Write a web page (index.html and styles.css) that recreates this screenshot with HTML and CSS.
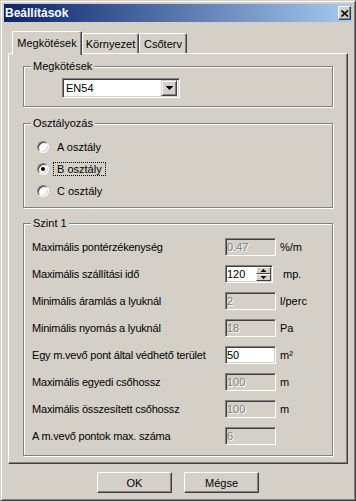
FILE: index.html
```html
<!DOCTYPE html>
<html lang="hu">
<head>
    <meta charset="UTF-8">
    <title>Beállítások</title>
    <link rel="stylesheet" href="styles.css">
</head>
<body>
    <div class="window">
        <div class="titlebar">
            <span class="title">Beállítások</span>
            <span class="close-btn">
                <svg width="8" height="7" viewBox="0 0 8 7"><path d="M0.5 0.5L7 6.5M7 0.5L0.5 6.5" stroke="#000" stroke-width="1.6"/></svg>
            </span>
        </div>

        <div class="tabs">
            <div class="tab tab-active" style="width:70px">Megkötések</div>
            <div class="tab" style="width:57px">Környezet</div>
            <div class="tab" style="width:48px">Csőterv</div>
        </div>

        <div class="panel">
            <fieldset class="group group-binding">
                <legend>Megkötések</legend>
                <div class="group-body">
                    <div class="combo">
                        <span class="combo-value">EN54</span>
                        <span class="combo-btn">
                            <svg width="7" height="4" viewBox="0 0 7 4"><path d="M0 0h7v1h-1v1h-1v1h-1v1h-1v-1h-1v-1h-1v-1h-1z" fill="#000"/></svg>
                        </span>
                    </div>
                </div>
            </fieldset>

            <fieldset class="group group-class">
                <legend>Osztályozás</legend>
                <div class="group-body">
                    <div class="radio"><span class="radio-box"></span><span class="radio-text">A osztály</span></div>
                    <div class="radio"><span class="radio-box radio-checked"></span><span class="radio-text radio-focus">B osztály</span></div>
                    <div class="radio"><span class="radio-box"></span><span class="radio-text">C osztály</span></div>
                </div>
            </fieldset>

            <fieldset class="group group-level">
                <legend>Szint 1</legend>
                <div class="group-body">
                    <div class="fields">
                        <div class="field-label">Maximális pontérzékenység</div>
                        <div class="input input-disabled">0.47</div>
                        <div class="unit">%/m</div>

                        <div class="field-label">Maximális szállítási idő</div>
                        <div class="spin">
                            <span class="spin-value">120</span>
                            <span class="spin-buttons">
                                <span class="spin-btn"><svg width="5" height="3" viewBox="0 0 5 3"><path d="M2 0h1v1h1v1h1v1h-5v-1h1v-1h1z" fill="#000"/></svg></span>
                                <span class="spin-btn"><svg width="5" height="3" viewBox="0 0 5 3"><path d="M0 0h5v1h-1v1h-1v1h-1v-1h-1v-1h-1z" fill="#000"/></svg></span>
                            </span>
                        </div>
                        <div class="unit unit-spin">mp.</div>

                        <div class="field-label">Minimális áramlás a lyuknál</div>
                        <div class="input input-disabled">2</div>
                        <div class="unit">l/perc</div>

                        <div class="field-label">Minimális nyomás a lyuknál</div>
                        <div class="input input-disabled">18</div>
                        <div class="unit">Pa</div>

                        <div class="field-label">Egy m.vevő pont által védhető terület</div>
                        <div class="input input-active">50</div>
                        <div class="unit">m²</div>

                        <div class="field-label">Maximális egyedi csőhossz</div>
                        <div class="input input-disabled">100</div>
                        <div class="unit">m</div>

                        <div class="field-label">Maximális összesített csőhossz</div>
                        <div class="input input-disabled">100</div>
                        <div class="unit">m</div>

                        <div class="field-label">A m.vevő pontok max. száma</div>
                        <div class="input input-disabled">6</div>
                        <div class="unit"></div>
                    </div>
                </div>
            </fieldset>
        </div>

        <div class="actions">
            <button class="btn" type="button">OK</button>
            <button class="btn" type="button">Mégse</button>
        </div>
    </div>
</body>
</html>
```

FILE: styles.css
```css
body {
    margin: 0;
    background-color: #d4d0c8;
    font-family: "Liberation Sans", Arial, sans-serif;
    font-size: 11px;
    color: #000;
}

.window {
    width: 356px;
    height: 501px;
    box-sizing: border-box;
    border: 1px solid;
    border-color: #d4d0c8 #404040 #404040 #d4d0c8;
    box-shadow: inset 1px 1px #fff, inset -1px -1px #808080;
    padding: 3px;
    background-color: #d4d0c8;
    display: flex;
    flex-direction: column;
}

/* title bar */
.titlebar {
    height: 18px;
    display: flex;
    align-items: center;
    justify-content: space-between;
    padding: 0 1px 0 1px;
    background: linear-gradient(to right, #0a246a, #a6caf0);
}

.title {
    color: #fff;
    font-weight: bold;
    font-size: 12px;
}

.close-btn {
    width: 13px;
    height: 14px;
    box-sizing: border-box;
    border: 1px solid;
    border-color: #fff #404040 #404040 #fff;
    box-shadow: inset -1px -1px #808080;
    background-color: #d4d0c8;
    display: flex;
    align-items: center;
    justify-content: center;
}

/* tabs */
.tabs {
    display: flex;
    align-items: flex-end;
    height: 24px;
    margin-top: 9px;
    margin-bottom: -2px;
    padding-left: 8px;
    position: relative;
    z-index: 1;
}

.tab {
    height: 20px;
    margin-bottom: 2px;
    box-sizing: border-box;
    border: 1px solid;
    border-color: #fff #404040 transparent #fff;
    border-bottom: none;
    border-radius: 2px 2px 0 0;
    box-shadow: inset -1px 0 #808080;
    display: flex;
    align-items: center;
    justify-content: center;
    background-color: #d4d0c8;
}

.tab-active {
    height: 24px;
    margin-bottom: 0;
    padding-bottom: 2px;
}

/* panel */
.panel {
    margin: 0 4px;
    border: 1px solid;
    border-color: #fff #404040 #404040 #fff;
    box-shadow: inset -1px -1px #808080;
    padding: 6px 14px 7px 14px;
}

.group {
    margin: 0;
    padding: 0;
    min-width: 0;
    border: 1px solid #808080;
    box-shadow: inset 1px 1px #fff, 1px 1px #fff;
}

.group legend {
    margin-left: 7px;
    padding: 0 2px;
    line-height: 13px;
    background-color: #d4d0c8;
}

.group-class {
    margin-top: 10px;
}

.group-level {
    margin-top: 9px;
}

.group-binding .group-body {
    padding: 5px 0 8px 38px;
}

.group-class .group-body {
    padding: 6px 0 5px 13px;
}

.group-level .group-body {
    padding: 3px 0 6px 8px;
}

/* combo */
.combo {
    width: 118px;
    height: 20px;
    box-sizing: border-box;
    border: 1px solid;
    border-color: #808080 #fff #fff #808080;
    box-shadow: inset 1px 1px #404040, inset -1px -1px #d4d0c8;
    background-color: #fff;
    display: flex;
    align-items: center;
    padding: 2px;
}

.combo-value {
    flex: 1;
    padding-left: 1px;
}

.combo-btn {
    width: 16px;
    height: 16px;
    box-sizing: border-box;
    border: 1px solid;
    border-color: #d4d0c8 #404040 #404040 #d4d0c8;
    box-shadow: inset 1px 1px #fff, inset -1px -1px #808080;
    background-color: #d4d0c8;
    display: flex;
    align-items: center;
    justify-content: center;
}

/* radios */
.radio {
    display: flex;
    align-items: center;
    height: 22px;
}

.radio-box {
    width: 12px;
    height: 12px;
    box-sizing: border-box;
    border-radius: 50%;
    border: 1px solid;
    border-color: #808080 #fff #fff #808080;
    box-shadow: inset 1px 1px #404040, inset -1px -1px #d4d0c8;
    background-color: #fff;
    display: flex;
    align-items: center;
    justify-content: center;
    margin-right: 4px;
}

.radio-checked::after {
    content: "";
    width: 4px;
    height: 4px;
    border-radius: 50%;
    background-color: #000;
}

.radio-text {
    border: 1px dotted transparent;
    padding: 0 3px;
    line-height: 12px;
}

.radio-focus {
    border-color: #000;
}

/* fields */
.fields {
    display: grid;
    grid-template-columns: 193px 51px auto;
    grid-auto-rows: 27px;
    align-items: center;
}

.field-label {
    letter-spacing: -0.2px;
}

.input {
    height: 18px;
    box-sizing: border-box;
    border: 1px solid;
    border-color: #808080 #fff #fff #808080;
    box-shadow: inset 1px 1px #404040, inset -1px -1px #d4d0c8;
    padding: 0 1px;
    line-height: 16px;
}

.input-disabled {
    color: #808080;
    text-shadow: 1px 1px #fff;
}

.input-active {
    background-color: #fff;
}

.spin {
    width: 48px;
    height: 18px;
    box-sizing: border-box;
    border: 1px solid;
    border-color: #808080 #fff #fff #808080;
    box-shadow: inset 1px 1px #404040, inset -1px -1px #d4d0c8;
    background-color: #fff;
    padding: 1px 1px 1px 1px;
    display: flex;
}

.spin-value {
    flex: 1;
    line-height: 14px;
}

.spin-buttons {
    width: 15px;
    display: flex;
    flex-direction: column;
}

.spin-btn {
    height: 7px;
    box-sizing: border-box;
    border: 1px solid;
    border-color: #fff #404040 #404040 #fff;
    background-color: #d4d0c8;
    display: flex;
    align-items: center;
    justify-content: center;
}

.unit {
    padding-left: 4px;
}

.unit-spin {
    padding-left: 7px;
}

/* buttons */
.actions {
    display: flex;
    justify-content: center;
    gap: 12px;
    margin-top: 8px;
}

.btn {
    width: 75px;
    height: 21px;
    padding: 0;
    font: inherit;
    color: #000;
    background-color: #d4d0c8;
    border: 1px solid;
    border-color: #fff #404040 #404040 #fff;
    box-shadow: inset -1px -1px #808080;
}
```
